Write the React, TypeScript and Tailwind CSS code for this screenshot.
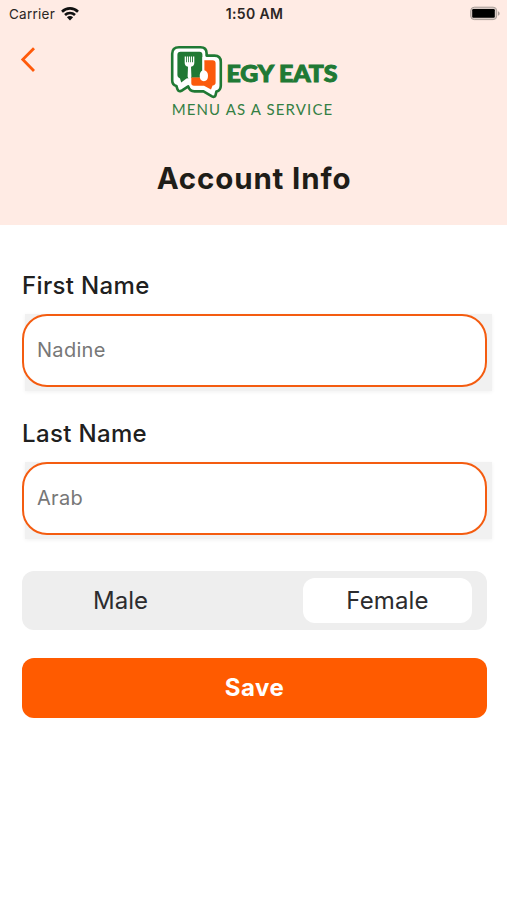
import React from "react";

function StatusBar() {
  return (
    <div className="flex h-7 items-center justify-between pl-[9px] pr-[7px] text-[#2b2624]">
      <div className="flex w-[160px] items-center gap-[6px]">
        <span className="text-[13.5px] leading-4 tracking-[0.25px]">Carrier</span>
        <svg width="18" height="14" viewBox="0 0 18 14" fill="none" stroke="#111" strokeWidth="2.6">
          <path d="M1 4.7C5.5 .3 12.5 .3 17 4.7" />
          <path d="M4 8c2.8-2.7 7.2-2.7 10 0" />
          <path d="M9 13.4 5.9 10.3c1.7-1.6 4.5-1.6 6.2 0Z" fill="#111" stroke="none" />
        </svg>
      </div>
      <span className="text-[14px] font-semibold leading-4 tracking-[0.35px]">1:50 AM</span>
      <div className="flex w-[160px] justify-end pb-[2px]">
        <svg width="31" height="15" viewBox="0 0 31 15">
          <rect x="1.7" y="1.2" width="26" height="12.4" rx="3.6" fill="#d9cbc5" stroke="#a89d98" strokeWidth="1" />
          <rect x="3.2" y="3" width="22.6" height="8.8" rx="1.2" fill="#000" />
          <path d="M29 5.2c2.2 1 2.2 3.6 0 4.6Z" fill="#a89d98" />
        </svg>
      </div>
    </div>
  );
}

function Logo() {
  return (
    <svg width="180" height="80" viewBox="165 42 180 80">
      <path
        d="M179 47.2H200.5Q206.6 47.2 206.6 53.2V55.6H214.5Q220.8 55.6 220.8 62V85.5Q220.8 90.6 216.4 91.6L215.4 95.6Q214.4 97.6 212 96.4L203.5 91.4H194.5Q189.6 91.4 188.2 86.4L181.4 90.8Q178.6 92 177.6 89.6L176.4 86Q172.2 84.8 172.2 80.2V53.8Q172.2 47.2 179 47.2Z"
        fill="#fff"
        stroke="#207934"
        strokeWidth="2.6"
        strokeLinejoin="round"
      />
      <path d="M180.5 51.7H199.5Q202.4 51.7 202.4 54.6V77.8H191.3L186.5 78.6L181.2 82.4L180 78.4Q177.4 77.8 177.4 75.2V54.8Q177.4 51.7 180.5 51.7Z" fill="#207934" />
      <path d="M203.4 60.2H212.6Q215.6 60.2 215.6 63.2V82.6Q215.6 85.2 212.6 85.6L211 89.4L204 85.8H194Q191.3 85.8 191.3 83V77.4H203.4Z" fill="#fb5a0d" />
      <path d="M202.4 57H203.6Q204.4 59 204.4 63V70.2Q208 71.4 208 75.8Q208 81.2 203.9 81.2Q199.7 81.2 199.7 75.8Q199.7 71.8 202.4 70.4Z" fill="#fff" />
      <path d="M184.7 56.4V62.9Q184.7 65.9 188 66.7L187.6 76.5Q187.8 78.6 189.5 78.6Q191.3 78.6 191.4 76.5L191 66.7Q194.3 65.9 194.3 62.9V56.4H193V62.2H192.1V56.4H190.8V62.2H190V56.4H188.8V62.2H188V56.4H186.8V62.2H186V56.4Z" fill="#fff" />
      <text x="226.5" y="82" textLength="111" lengthAdjust="spacingAndGlyphs" fill="#207934" stroke="#207934" strokeWidth="1" className="font-['Lato'] text-[22.5px] font-black">EGY EATS</text>
      <text x="171.7" y="115.3" textLength="160.5" lengthAdjust="spacing" fill="#347f43" className="font-['Lato'] text-[15px]">MENU AS A SERVICE</text>
    </svg>
  );
}

function Field({ label, value }: { label: string; value: string }) {
  return (
    <div className="h-[148px]">
      <label className="block h-[45px] pt-px text-[24px] font-medium leading-8 tracking-[0.35px] text-[#202020]">{label}</label>
      <div className="ml-[3px] h-[77px] w-[467px] bg-[#f1f1f1] shadow-[0_1px_4px_#f1f1f1]">
        <div className="-ml-[3px] flex h-[73px] w-[465px] items-center rounded-[25px] border-2 border-[#f45c10] bg-white pl-[13px] pb-px text-[20px] tracking-[0.3px] text-[#777]">
          {value}
        </div>
      </div>
    </div>
  );
}

export default function App() {
  return (
    <main className="h-[900px] w-[507px] overflow-hidden bg-white font-['Inter','Liberation_Sans',sans-serif]">
      <header className="h-[225px] bg-[#ffebe4]">
        <StatusBar />
        <div className="flex h-[108px] pl-[20px] pt-[14px]">
          <button aria-label="Back" className="h-9 w-[145px]">
            <svg width="18" height="36" viewBox="0 0 18 36" fill="none" stroke="#ff5a0a" strokeWidth="2.8">
              <path d="M14 6.2 2.8 17.6 14 29" />
            </svg>
          </button>
          <Logo />
        </div>
        <h1 className="pl-px pt-[22px] text-center text-[29.5px] font-bold leading-10 tracking-[0.85px] text-[#1f1d18]">Account Info</h1>
      </header>
      <section className="flex flex-col pl-[22px] pt-[44px]">
        <Field label="First Name" value="Nadine" />
        <Field label="Last Name" value="Arab" />
        <div className="mt-[6px] flex h-[59px] w-[465px] items-center rounded-[12px] bg-[#eee] text-[24px] text-[#2c2c2e]">
          <div className="w-[197px] text-center">Male</div>
          <div className="ml-[84px] flex h-[45px] w-[169px] items-center justify-center rounded-[12px] bg-white tracking-[0.15px]">Female</div>
        </div>
        <button className="mt-[28px] h-[60px] w-[465px] rounded-[12px] bg-[#ff5b00] text-[24px] font-bold tracking-[0.5px] text-white">Save</button>
      </section>
    </main>
  );
}
